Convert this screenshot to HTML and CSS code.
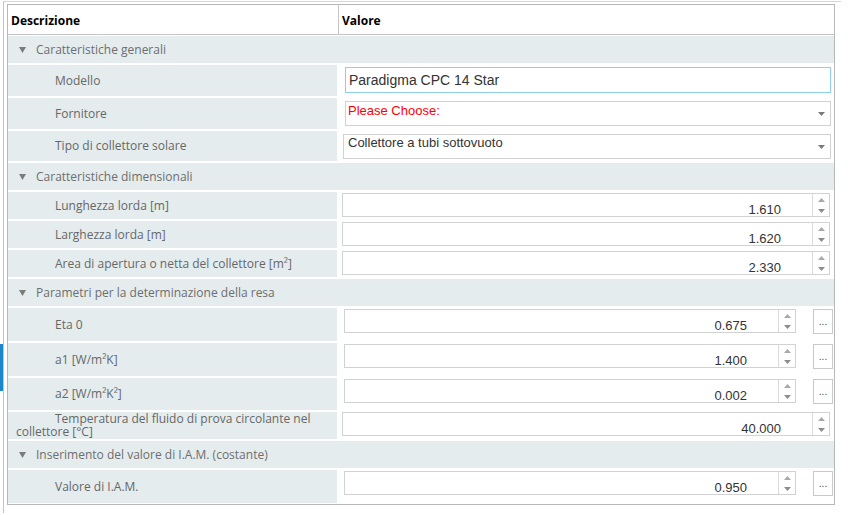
FILE: index.html
```html
<!DOCTYPE html>
<html lang="it">
<head>
<meta charset="utf-8">
<title>Proprietà collettore solare</title>
<link rel="stylesheet" href="styles.css">
</head>
<body>
<div class="splitter-handle"></div>
<div class="pane">
  <div class="grid">
    <div class="grid-head">
      <div class="head-cell head-desc">Descrizione</div>
      <div class="head-cell head-val">Valore</div>
    </div>
    <div class="grid-body">

      <div class="group"><svg class="caret" width="7" height="6" viewBox="0 0 7 6"><path d="M0 0H7L3.5 6Z"/></svg>Caratteristiche generali</div>

      <div class="row row-text">
        <div class="label"><span class="label-text">Modello</span></div>
        <div class="value"><div class="textbox">Paradigma CPC 14 Star</div></div>
      </div>

      <div class="row row-select">
        <div class="label"><span class="label-text">Fornitore</span></div>
        <div class="value">
          <div class="select"><span class="select-text placeholder">Please Choose:</span><svg class="select-arrow" width="7" height="4" viewBox="0 0 7 4"><path d="M0 0H7L3.5 4Z"/></svg></div>
        </div>
      </div>

      <div class="row row-select row-select-alt">
        <div class="label"><span class="label-text">Tipo di collettore solare</span></div>
        <div class="value">
          <div class="select"><span class="select-text">Collettore a tubi sottovuoto</span><svg class="select-arrow" width="7" height="4" viewBox="0 0 7 4"><path d="M0 0H7L3.5 4Z"/></svg></div>
        </div>
      </div>

      <div class="group"><svg class="caret" width="7" height="6" viewBox="0 0 7 6"><path d="M0 0H7L3.5 6Z"/></svg>Caratteristiche dimensionali</div>

      <div class="row row-num">
        <div class="label"><span class="label-text">Lunghezza lorda [m]</span></div>
        <div class="value">
          <div class="numeric"><span class="num-val">1.610</span><span class="spin"><svg class="up" width="7" height="4" viewBox="0 0 7 4"><path d="M0 4L3.5 0L7 4Z"/></svg><svg class="down" width="7" height="4" viewBox="0 0 7 4"><path d="M0 0H7L3.5 4Z"/></svg></span></div>
        </div>
      </div>

      <div class="row row-num">
        <div class="label"><span class="label-text">Larghezza lorda [m]</span></div>
        <div class="value">
          <div class="numeric"><span class="num-val">1.620</span><span class="spin"><svg class="up" width="7" height="4" viewBox="0 0 7 4"><path d="M0 4L3.5 0L7 4Z"/></svg><svg class="down" width="7" height="4" viewBox="0 0 7 4"><path d="M0 0H7L3.5 4Z"/></svg></span></div>
        </div>
      </div>

      <div class="row row-num">
        <div class="label"><span class="label-text">Area di apertura o netta del collettore [m²]</span></div>
        <div class="value">
          <div class="numeric"><span class="num-val">2.330</span><span class="spin"><svg class="up" width="7" height="4" viewBox="0 0 7 4"><path d="M0 4L3.5 0L7 4Z"/></svg><svg class="down" width="7" height="4" viewBox="0 0 7 4"><path d="M0 0H7L3.5 4Z"/></svg></span></div>
        </div>
      </div>

      <div class="group"><svg class="caret" width="7" height="6" viewBox="0 0 7 6"><path d="M0 0H7L3.5 6Z"/></svg>Parametri per la determinazione della resa</div>

      <div class="row row-btn">
        <div class="label"><span class="label-text">Eta 0</span></div>
        <div class="value">
          <div class="numeric"><span class="num-val">0.675</span><span class="spin"><svg class="up" width="7" height="4" viewBox="0 0 7 4"><path d="M0 4L3.5 0L7 4Z"/></svg><svg class="down" width="7" height="4" viewBox="0 0 7 4"><path d="M0 0H7L3.5 4Z"/></svg></span></div>
          <div class="more-btn">...</div>
        </div>
      </div>

      <div class="row row-btn">
        <div class="label"><span class="label-text">a1 [W/m²K]</span></div>
        <div class="value">
          <div class="numeric"><span class="num-val">1.400</span><span class="spin"><svg class="up" width="7" height="4" viewBox="0 0 7 4"><path d="M0 4L3.5 0L7 4Z"/></svg><svg class="down" width="7" height="4" viewBox="0 0 7 4"><path d="M0 0H7L3.5 4Z"/></svg></span></div>
          <div class="more-btn">...</div>
        </div>
      </div>

      <div class="row row-btn row-btn-short">
        <div class="label"><span class="label-text">a2 [W/m²K²]</span></div>
        <div class="value">
          <div class="numeric"><span class="num-val">0.002</span><span class="spin"><svg class="up" width="7" height="4" viewBox="0 0 7 4"><path d="M0 4L3.5 0L7 4Z"/></svg><svg class="down" width="7" height="4" viewBox="0 0 7 4"><path d="M0 0H7L3.5 4Z"/></svg></span></div>
          <div class="more-btn">...</div>
        </div>
      </div>

      <div class="row row-num row-wrap">
        <div class="label"><span class="label-text">Temperatura del fluido di prova circolante nel collettore [°C]</span></div>
        <div class="value">
          <div class="numeric"><span class="num-val">40.000</span><span class="spin"><svg class="up" width="7" height="4" viewBox="0 0 7 4"><path d="M0 4L3.5 0L7 4Z"/></svg><svg class="down" width="7" height="4" viewBox="0 0 7 4"><path d="M0 0H7L3.5 4Z"/></svg></span></div>
        </div>
      </div>

      <div class="group"><svg class="caret" width="7" height="6" viewBox="0 0 7 6"><path d="M0 0H7L3.5 6Z"/></svg>Inserimento del valore di I.A.M. (costante)</div>

      <div class="row row-btn">
        <div class="label"><span class="label-text">Valore di I.A.M.</span></div>
        <div class="value">
          <div class="numeric"><span class="num-val">0.950</span><span class="spin"><svg class="up" width="7" height="4" viewBox="0 0 7 4"><path d="M0 4L3.5 0L7 4Z"/></svg><svg class="down" width="7" height="4" viewBox="0 0 7 4"><path d="M0 0H7L3.5 4Z"/></svg></span></div>
          <div class="more-btn">...</div>
        </div>
      </div>

    </div>
  </div>
</div>
</body>
</html>
```

FILE: styles.css
```css
* {
  box-sizing: border-box;
}

html,
body {
  margin: 0;
  padding: 0;
  background: #ffffff;
}

body {
  position: relative;
  width: 849px;
  height: 515px;
  overflow: hidden;
  font-family: "Open Sans", "Noto Sans", sans-serif;
  font-size: 12px;
  color: #6c6c6c;
}

.splitter-handle {
  position: absolute;
  left: 0;
  top: 344px;
  width: 3px;
  height: 47px;
  background: #1b86c9;
}

.pane {
  margin: 1px 0 0 3px;
  width: 838px;
  height: 512px;
  border-top: 1px solid #d6d6d6;
  border-left: 1px solid #c4c4c4;
  padding: 2px 0 0 3px;
}

.grid {
  width: 828px;
  border: 1px solid #b8b8b8;
}

/* header */
.grid-head {
  display: flex;
  height: 30px;
  border-bottom: 1px solid #c4c4c4;
}

.head-cell {
  padding: 8px 0 0 3px;
  line-height: 16px;
  font-weight: 700;
  color: #000000;
}

.head-desc {
  width: 331px;
  border-right: 1px solid #c4c4c4;
}

.head-val {
  flex: 1;
}

/* body */
.grid-body {
  display: flex;
  flex-direction: column;
  gap: 2px;
  padding: 1px 0;
}

.group {
  display: flex;
  align-items: center;
  height: 27px;
  padding-left: 11px;
  background: #e4ecee;
  color: #6e6e6e;
  line-height: 16px;
}

.caret {
  display: block;
  margin-right: 10px;
  fill: #7b7b7b;
}

.row {
  display: flex;
}

.label {
  display: flex;
  align-items: center;
  width: 329px;
  flex: none;
  padding-left: 8px;
  background: #e4ecee;
  color: #676767;
  text-indent: 39px;
  line-height: 16px;
}

.label-text {
  display: block;
}

.value {
  flex: 1;
  display: flex;
  align-items: flex-start;
}

/* row variants */
.row-text {
  height: 31px;
}

.row-text .value {
  padding: 2px 3px 0 8px;
}

.row-select {
  height: 31px;
}

.row-select .value {
  padding: 3px 3px 0 8px;
}

.row-select-alt {
  height: 30px;
}

.row-select-alt .value {
  padding-left: 6px;
}

.row-num {
  height: 27px;
}

.row-num .value {
  padding: 1px 4px 0 5px;
}

.row-btn {
  height: 33px;
}

.row-btn-short {
  height: 32px;
}

.row-btn .value {
  padding: 1px 1px 0 7px;
}

.row-wrap .label {
  align-items: flex-start;
  line-height: 13px;
}

.row-wrap .value {
  padding-top: 0;
}

/* controls */
.textbox {
  flex: 1;
  height: 26px;
  border: 1px solid #8dcfeb;
  padding-left: 3px;
  font-family: "Liberation Sans", Arial, sans-serif;
  font-size: 14px;
  line-height: 24px;
  color: #333333;
}

.select {
  flex: 1;
  display: flex;
  height: 25px;
  border: 1px solid #d2d2d2;
  background: #ffffff;
}

.select-text {
  flex: 1;
  padding: 1px 0 0 2px;
  font-family: "Liberation Sans", Arial, sans-serif;
  font-size: 13px;
  line-height: 15px;
  color: #333333;
}

.row-select-alt .select-text {
  padding: 0 0 0 4px;
}

.select-text.placeholder {
  color: #ff0000;
}

.select-arrow {
  align-self: center;
  margin-right: 5px;
  fill: #7a7a7a;
}

.numeric {
  flex: 1;
  display: flex;
  height: 24px;
  border: 1px solid #d2d2d2;
  background: #ffffff;
}

.num-val {
  flex: 1;
  align-self: flex-end;
  padding-right: 31px;
  text-align: right;
  font-family: "Liberation Sans", Arial, sans-serif;
  font-size: 13px;
  line-height: 12px;
  color: #333333;
}

.spin {
  width: 17px;
  flex: none;
  display: flex;
  flex-direction: column;
  align-items: center;
  justify-content: center;
  gap: 7px;
  border-left: 1px solid #dadada;
}

.spin svg {
  display: block;
}

.spin .up {
  fill: #a8a8a8;
}

.spin .down {
  fill: #8c8c8c;
}

.more-btn {
  flex: none;
  width: 20px;
  height: 25px;
  margin-left: 17px;
  border: 1px solid #c9c9c9;
  background: #ffffff;
  display: flex;
  align-items: center;
  justify-content: center;
  font-family: "Liberation Sans", Arial, sans-serif;
  font-size: 10px;
  line-height: 10px;
  color: #444444;
}

.row-btn .numeric {
  flex: none;
  width: 452px;
}
```
